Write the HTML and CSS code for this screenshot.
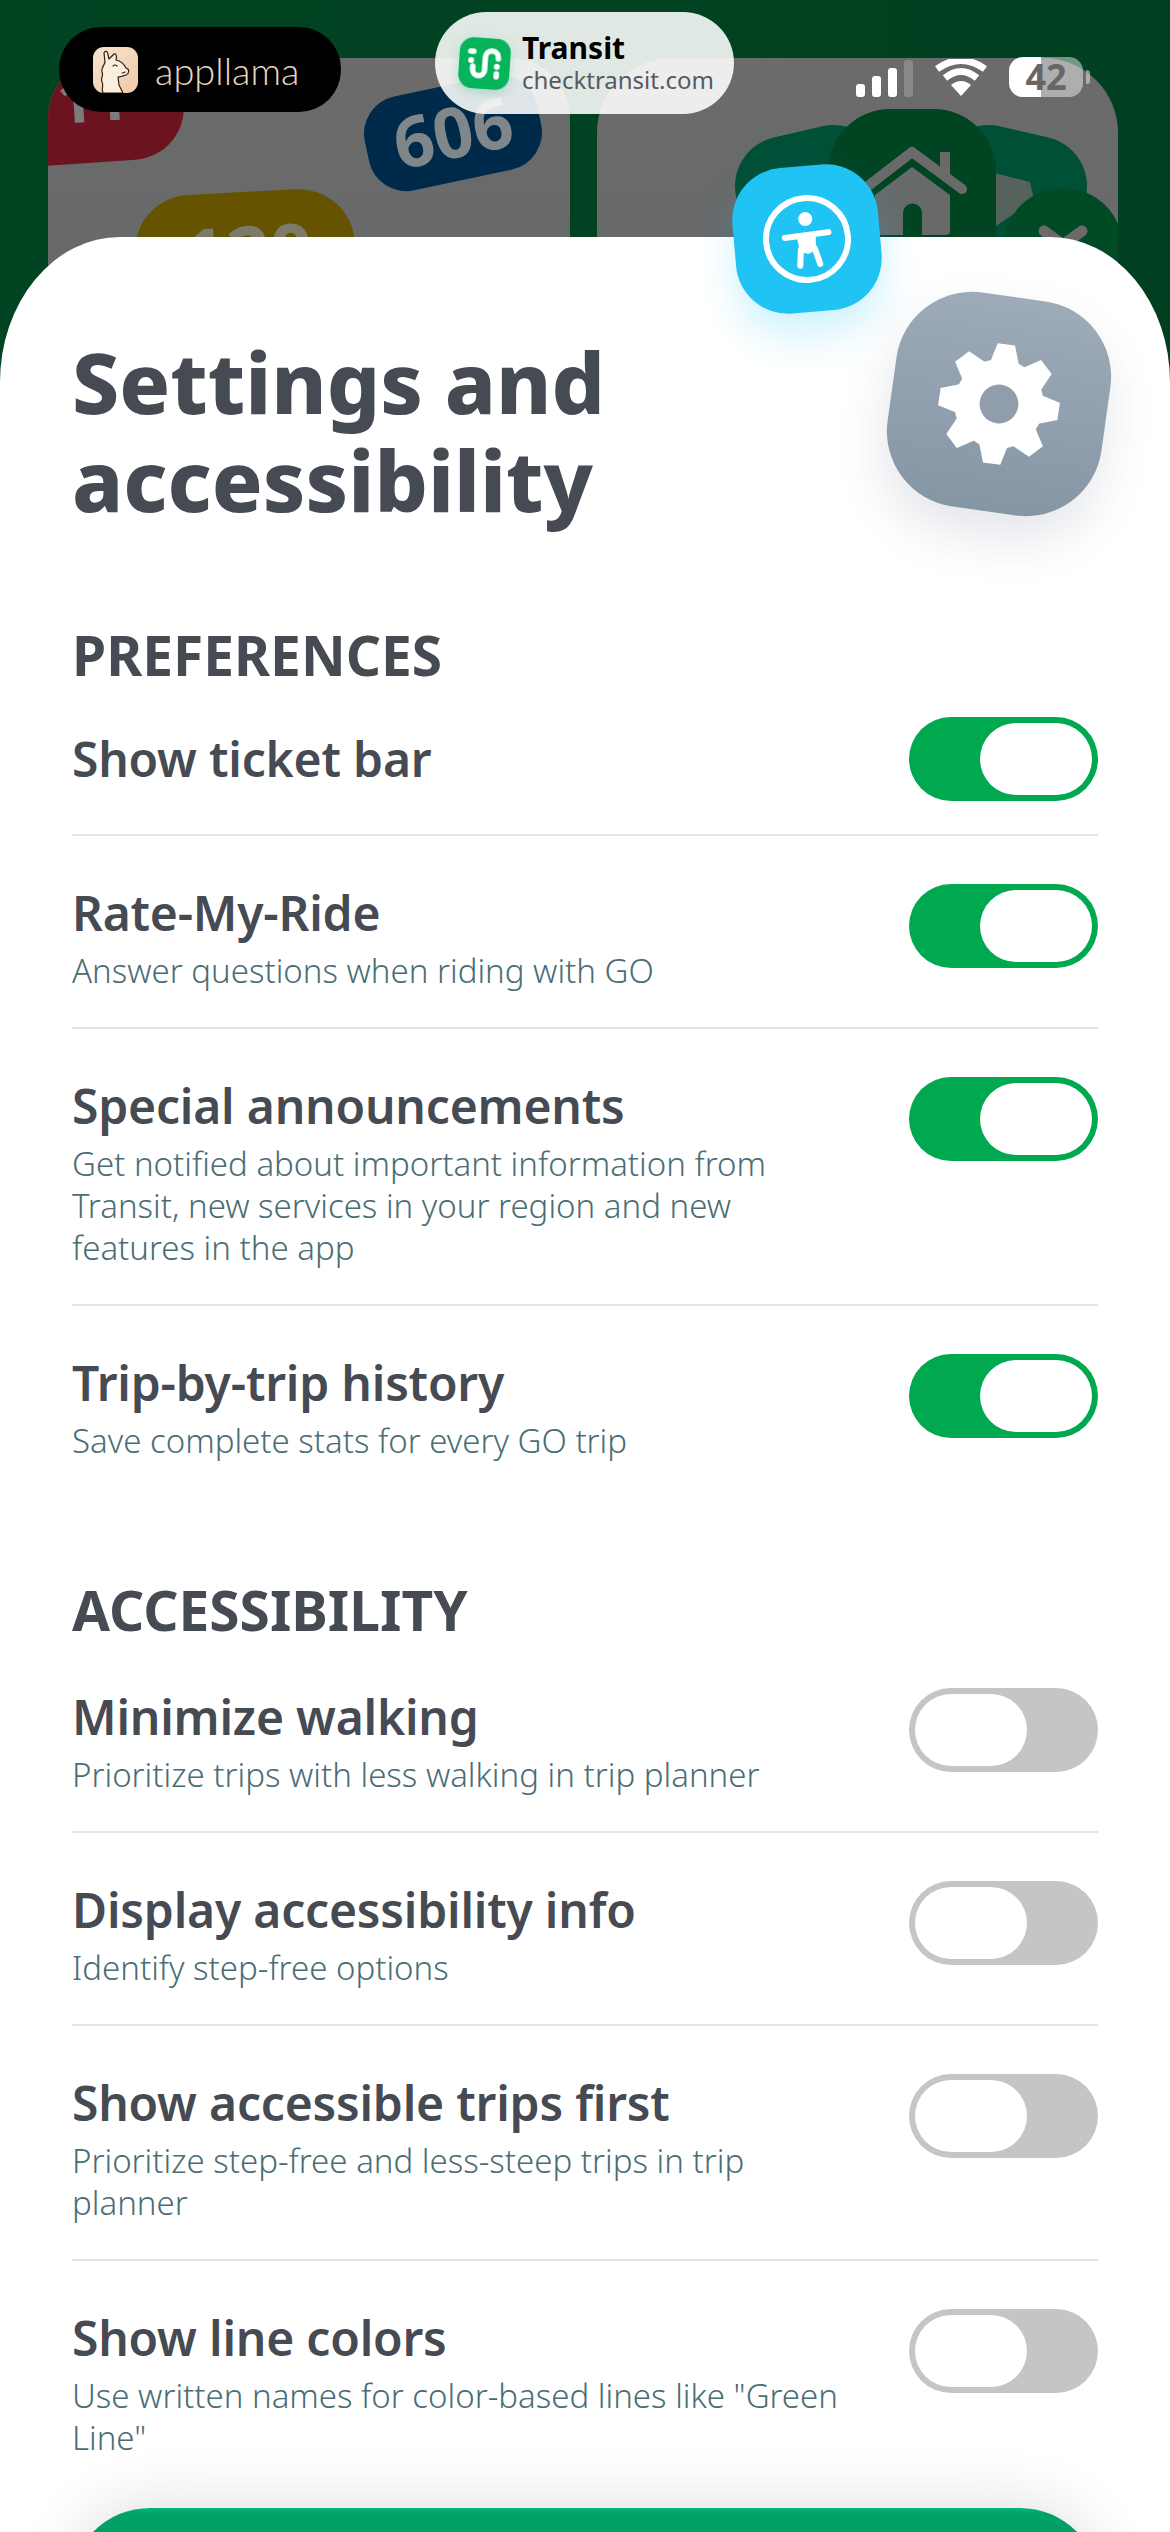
FILE: index.html
```html
<!DOCTYPE html>
<html lang="en">
<head>
  <meta charset="UTF-8">
  <meta name="viewport" content="width=device-width, initial-scale=1.0">
  <title>Settings and accessibility</title>
  <link rel="stylesheet" href="styles.css">
</head>
<body>
  <!-- blurred home screen behind the sheet -->
  <svg class="backdrop" width="1170" height="300" viewBox="0 0 1170 300">
    <defs>
      <clipPath id="leftCard"><rect x="48" y="58" width="522" height="300" rx="60"/></clipPath>
      <clipPath id="rightCard"><rect x="597" y="58" width="521" height="300" rx="75"/></clipPath>
      <linearGradient id="cardFill" x1="0" y1="0" x2="0" y2="1">
        <stop offset="0" stop-color="#6b6b6b"/>
        <stop offset="1" stop-color="#666869"/>
      </linearGradient>
    </defs>
    <rect x="48" y="58" width="522" height="300" rx="60" fill="url(#cardFill)"/>
    <rect x="597" y="58" width="521" height="300" rx="75" fill="url(#cardFill)"/>
    <g clip-path="url(#leftCard)">
      <g transform="rotate(-4 100 110)">
        <rect x="-40" y="30" width="224" height="132" rx="52" fill="#6b1420"/>
        <text class="badge-num" x="58" y="121" font-size="62" fill="#7c7c7c">11</text>
      </g>
      <g transform="rotate(-12 453 133)">
        <rect x="365" y="85" width="176" height="96" rx="38" fill="#002a4a"/>
        <text class="badge-num" x="453" y="158" font-size="70" text-anchor="middle" fill="#80878a">606</text>
      </g>
      <g transform="rotate(-3 245 250)">
        <rect x="135" y="192" width="220" height="120" rx="56" fill="#665300"/>
        <text class="badge-num" x="248" y="281" font-size="76" text-anchor="middle" fill="#7c7a68">120</text>
      </g>
    </g>
    <g clip-path="url(#rightCard)">
      <rect x="740" y="130" width="150" height="150" rx="50" fill="#004f37" transform="rotate(-13 815 205)"/>
      <rect x="932" y="130" width="150" height="150" rx="50" fill="#004f37" transform="rotate(13 1007 205)"/>
      <path d="M990 172l40 10 4 18-44 30z" fill="#55635c"/>
      <rect x="828" y="109" width="168" height="190" rx="62" fill="#004422"/>
      <path d="M868 186l44-34 50 37" fill="none" stroke="#6a6a6a" stroke-width="10" stroke-linecap="round" stroke-linejoin="round"/>
      <rect x="940" y="152" width="10" height="26" fill="#6a6a6a"/>
      <path d="M912 167l38 28v36a4 4 0 0 1-4 4h-24v-22a9 9 0 0 0-19 0v22h-24a4 4 0 0 1-4-4v-36z" fill="#686a6a"/>
      <circle cx="1063" cy="248" r="60" fill="#004a25"/>
      <path d="M1044 231l19 14 19-14" fill="none" stroke="#6a6a6a" stroke-width="11" stroke-linecap="round"/>
    </g>
  </svg>

  <div class="pill pill-brand">
    <svg class="llama" width="45" height="46" viewBox="0 0 45 46">
      <defs>
        <linearGradient id="llamaBg" x1="0" y1="0" x2="1" y2="1">
          <stop offset="0" stop-color="#f6e4cf"/>
          <stop offset="1" stop-color="#efcba8"/>
        </linearGradient>
      </defs>
      <rect width="45" height="46" rx="11" fill="url(#llamaBg)"/>
      <path d="M10 46C8 41 11 39 9 35 7 31 11 29 9 25 8 21 11 19 12 15L11 6C12 3 15 4 15 8L16 12 20 8C23 5 24 9 23 13 28 14 31 17 33 21 37 22 36 27 33 28 30 29 27 30 25 30L26 38 30 46Z" fill="#fbeedd" stroke="#2b2018" stroke-width="1.2" stroke-linejoin="round"/>
      <path d="M20 19q2-2 4 0M29 26q2 0 3-1" fill="none" stroke="#2b2018" stroke-width="1.1" stroke-linecap="round"/>
    </svg>
    <span class="brand-name">appllama</span>
  </div>

  <div class="pill pill-site">
    <svg class="transit-logo" width="53" height="53" viewBox="0 0 53 53">
      <rect x="1" y="1" width="51" height="51" rx="14" fill="#06b45c"/>
      <path d="M15 30v3a6 6 0 0 0 12 0V20a6.5 6.5 0 0 1 13 0v1" fill="none" stroke="#fff" stroke-width="5.5" stroke-linecap="round"/>
      <path d="M12 15h3" fill="none" stroke="#fff" stroke-width="5.5" stroke-linecap="round"/>
      <circle cx="13" cy="24" r="3" fill="#fff"/>
      <circle cx="39" cy="29" r="3" fill="#fff"/>
      <path d="M39 36v3" fill="none" stroke="#fff" stroke-width="5.5" stroke-linecap="round"/>
    </svg>
    <div class="site-text">
      <div class="site-name">Transit</div>
      <div class="site-url">checktransit.com</div>
    </div>
  </div>

  <div class="status">
    <div class="signal">
      <span class="bar bar-1"></span>
      <span class="bar bar-2"></span>
      <span class="bar bar-3"></span>
      <span class="bar bar-4"></span>
    </div>
    <svg class="wifi" width="52" height="38" viewBox="0 0 52 38">
      <path d="M26 37l-10-11q10-8 20 0z" fill="#fff"/>
      <path d="M10 19q16-13 32 0" fill="none" stroke="#fff" stroke-width="7"/>
      <path d="M2 10q24-17 48 0" fill="none" stroke="#fff" stroke-width="7"/>
    </svg>
    <div class="battery"><span class="battery-num">42</span></div>
    <span class="battery-nib"></span>
  </div>

  <div class="a11y-tile">
    <svg width="96" height="96" viewBox="0 0 96 96">
      <circle cx="48" cy="48" r="41" fill="none" stroke="#fff" stroke-width="6"/>
      <circle cx="48" cy="28" r="7" fill="#fff"/>
      <path d="M26 45l44-2" fill="none" stroke="#fff" stroke-width="6" stroke-linecap="round"/>
      <path d="M38 45h19l-1 15-8 3-8-3z" fill="#fff"/>
      <path d="M41 58l-2 16M55 58l4 16" fill="none" stroke="#fff" stroke-width="6" stroke-linecap="round"/>
    </svg>
  </div>

  <main class="sheet">
    <div class="gear-tile">
      <svg width="126" height="126" viewBox="-65 -65 130 130">
        <g fill="#fff">
          <circle r="46"/>
          <path d="M-15-42L-10-62H8L15-42z"/>
          <path d="M-15-42L-10-62H8L15-42z" transform="rotate(45)"/>
          <path d="M-15-42L-10-62H8L15-42z" transform="rotate(90)"/>
          <path d="M-15-42L-10-62H8L15-42z" transform="rotate(135)"/>
          <path d="M-15-42L-10-62H8L15-42z" transform="rotate(180)"/>
          <path d="M-15-42L-10-62H8L15-42z" transform="rotate(225)"/>
          <path d="M-15-42L-10-62H8L15-42z" transform="rotate(270)"/>
          <path d="M-15-42L-10-62H8L15-42z" transform="rotate(315)"/>
        </g>
        <circle r="20" fill="#909eac"/>
      </svg>
    </div>

    <h1>Settings and<br>accessibility</h1>

    <section class="group">
      <h2>PREFERENCES</h2>
      <div class="row row-single">
        <div class="row-label">Show ticket bar</div>
        <div class="toggle on"><span class="knob"></span></div>
      </div>
      <div class="row">
        <div class="row-text">
          <div class="row-label">Rate-My-Ride</div>
          <div class="row-sub">Answer questions when riding with GO</div>
        </div>
        <div class="toggle on"><span class="knob"></span></div>
      </div>
      <div class="row">
        <div class="row-text">
          <div class="row-label">Special announcements</div>
          <div class="row-sub">Get notified about important information from Transit, new services in your region and new features in the app</div>
        </div>
        <div class="toggle on"><span class="knob"></span></div>
      </div>
      <div class="row">
        <div class="row-text">
          <div class="row-label">Trip-by-trip history</div>
          <div class="row-sub">Save complete stats for every GO trip</div>
        </div>
        <div class="toggle on"><span class="knob"></span></div>
      </div>
    </section>

    <section class="group">
      <h2>ACCESSIBILITY</h2>
      <div class="row">
        <div class="row-text">
          <div class="row-label">Minimize walking</div>
          <div class="row-sub">Prioritize trips with less walking in trip planner</div>
        </div>
        <div class="toggle"><span class="knob"></span></div>
      </div>
      <div class="row">
        <div class="row-text">
          <div class="row-label">Display accessibility info</div>
          <div class="row-sub">Identify step-free options</div>
        </div>
        <div class="toggle"><span class="knob"></span></div>
      </div>
      <div class="row">
        <div class="row-text">
          <div class="row-label">Show accessible trips first</div>
          <div class="row-sub">Prioritize step-free and less-steep trips in trip planner</div>
        </div>
        <div class="toggle"><span class="knob"></span></div>
      </div>
      <div class="row">
        <div class="row-text">
          <div class="row-label">Show line colors</div>
          <div class="row-sub">Use written names for color-based lines like "Green Line"</div>
        </div>
        <div class="toggle"><span class="knob"></span></div>
      </div>
    </section>

    <div class="cta"></div>
  </main>
</body>
</html>
```

FILE: styles.css
```css
html, body {
  margin: 0;
  height: 2532px;
  overflow: hidden;
}

body {
  position: relative;
  background: linear-gradient(90deg, #004422, #004020);
  font-family: 'Noto Sans', sans-serif;
  color: #464a52;
}

.backdrop {
  position: absolute;
  top: 0;
  left: 0;
}

.badge-num {
  font-family: 'Noto Sans', sans-serif;
  font-weight: 700;
}

/* ---- status bar ---- */
.pill {
  position: absolute;
  display: flex;
  align-items: center;
  box-sizing: border-box;
  z-index: 3;
}

.pill-brand {
  top: 27px;
  left: 59px;
  width: 282px;
  height: 85px;
  padding-left: 34px;
  border-radius: 42px;
  background-color: #000;
}

.brand-name {
  margin-left: 17px;
  font-family: 'Lato', sans-serif;
  font-weight: 300;
  font-size: 38px;
  color: #e8d5c0;
}

.pill-site {
  top: 12px;
  left: 435px;
  width: 299px;
  height: 102px;
  padding-left: 23px;
  border-radius: 51px;
  background-color: rgba(255, 255, 255, 0.88);
}

.transit-logo {
  transform: rotate(4deg);
  filter: drop-shadow(0 4px 6px rgba(6, 180, 92, 0.25));
}

.site-text {
  margin-left: 11px;
}

.site-name {
  font-size: 30px;
  line-height: 34px;
  font-weight: 700;
  color: #000;
}

.site-url {
  font-size: 24px;
  line-height: 30px;
  color: #555a60;
}

.status {
  position: absolute;
  top: 57px;
  left: 856px;
  display: flex;
  align-items: flex-end;
  z-index: 3;
}

.signal {
  display: flex;
  align-items: flex-end;
  gap: 7px;
  height: 39px;
}

.bar {
  width: 9px;
  border-radius: 3px;
  background-color: #fff;
}

.bar-1 { height: 13px; }
.bar-2 { height: 21px; }
.bar-3 { height: 29px; }
.bar-4 { height: 37px; background-color: rgba(255, 255, 255, 0.2); }

.wifi {
  margin-left: 22px;
}

.battery {
  width: 74px;
  height: 40px;
  margin-left: 22px;
  border-radius: 14px;
  background: linear-gradient(90deg, #fff 43%, rgba(255, 255, 255, 0.45) 43%);
  text-align: center;
  font-size: 36px;
  line-height: 40px;
  font-weight: 700;
  color: #666;
}

.battery-nib {
  width: 4px;
  height: 14px;
  margin: 0 0 13px 3px;
  border-radius: 0 3px 3px 0;
  background-color: rgba(255, 255, 255, 0.45);
}

/* ---- floating tiles ---- */
.a11y-tile {
  position: absolute;
  top: 166px;
  left: 734px;
  width: 146px;
  height: 146px;
  display: flex;
  align-items: center;
  justify-content: center;
  border-radius: 52px;
  background-color: #20c4f4;
  box-shadow: 0 22px 40px rgba(32, 196, 244, 0.22);
  transform: rotate(-5deg);
  z-index: 2;
}

.gear-tile {
  position: absolute;
  top: 59px;
  left: 891px;
  width: 216px;
  height: 216px;
  display: flex;
  align-items: center;
  justify-content: center;
  border-radius: 76px;
  background: linear-gradient(180deg, #9eabb8, #8596a5);
  box-shadow: 0 24px 50px rgba(70, 80, 110, 0.14);
  transform: rotate(8deg);
}

/* ---- sheet ---- */
.sheet {
  position: relative;
  box-sizing: border-box;
  height: 2295px;
  margin-top: 237px;
  padding: 96px 72px 0;
  border-radius: 120px 120px 0 0 / 145px 145px 0 0;
  background-color: #fff;
  overflow: hidden;
  z-index: 1;
}

h1 {
  margin: 0 0 96px;
  font-size: 84px;
  line-height: 98px;
  font-weight: 800;
}

h2 {
  margin: 0;
  font-size: 55px;
  line-height: 60px;
  font-weight: 700;
}

.group + .group {
  margin-top: 118px;
}

.row {
  display: flex;
  align-items: flex-start;
  justify-content: space-between;
  padding: 48px 0 35px;
  border-bottom: 2px solid #e4e4e6;
}

.row:last-child {
  padding-bottom: 0;
  border-bottom: none;
}

.row-single {
  align-items: center;
  padding: 32px 0 33px;
}

.row-text {
  width: 775px;
}

.row-label {
  font-size: 48px;
  line-height: 58px;
  font-weight: 600;
  letter-spacing: -0.2px;
}

.row-sub {
  margin-top: 8px;
  font-size: 33px;
  line-height: 42px;
  font-weight: 300;
  color: #4a6d75;
}

.toggle {
  display: flex;
  flex: none;
  box-sizing: border-box;
  width: 189px;
  height: 84px;
  padding: 6px;
  border-radius: 42px;
  background-color: #c5c5c7;
}

.toggle.on {
  justify-content: flex-end;
  background-color: #00a950;
}

.knob {
  width: 112px;
  height: 72px;
  border-radius: 36px;
  background-color: #fff;
}

.cta {
  position: absolute;
  top: 2271px;
  left: 70px;
  width: 1030px;
  height: 160px;
  border-radius: 80px;
  background: linear-gradient(180deg, #00b87a 0, #00a066 6px, #009a62);
  box-shadow: 0 -6px 60px rgba(0, 0, 0, 0.12);
}
```
